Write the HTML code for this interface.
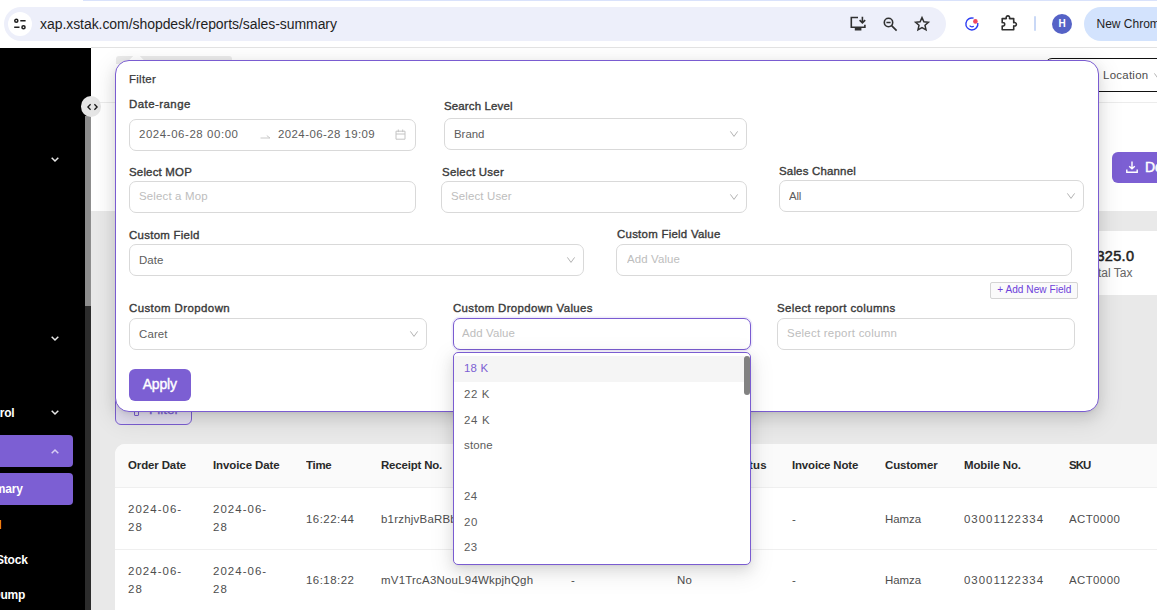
<!DOCTYPE html>
<html><head><meta charset="utf-8">
<style>
*{box-sizing:border-box;margin:0;padding:0}
html,body{width:1157px;height:610px;overflow:hidden;background:#fff;font-family:"Liberation Sans",sans-serif;}
body{position:relative}
.abs{position:absolute}
svg{position:absolute;overflow:visible}
/* browser chrome */
#chrome{left:0;top:0;width:1157px;height:48px;background:#fff}
#chromeline{left:91px;top:47px;width:1066px;height:1px;background:#e2e2e2}
#topstrip{left:83px;top:0;width:1074px;height:1px;background:#d9e2fb}
#omni{left:4px;top:7px;width:942px;height:34px;background:#edeffa;border-radius:17px}
#omni .ic{left:4px;top:5px;width:24px;height:24px;border-radius:12px;background:#fff}
#url{left:40px;top:15.5px;font-size:14px;line-height:16px;color:#1f1f1f;white-space:nowrap;letter-spacing:-.06px}
#newchrome{left:1084px;top:7px;width:90px;height:34px;border-radius:17px;background:#d3e3fd}
#newchrome span{position:absolute;left:12.5px;top:10px;font-size:12px;line-height:14px;color:#1f1f1f;white-space:nowrap}
#avatar{left:1052px;top:14px;width:20px;height:20px;border-radius:50%;background:#5562c6;color:#fff;font-size:10px;font-weight:bold;text-align:center;line-height:20px}
#divider{left:1034px;top:16px;width:2px;height:15px;background:#c9d8f6;border-radius:1px}
/* sidebar */
#side{left:0;top:48px;width:91px;height:562px;background:#000}
#strack{left:85px;top:306px;width:6px;height:304px;background:#2c2c2c}
#sthumb{left:85px;top:116px;width:6px;height:190px;background:#8d8d8d}
.sb{color:#fff;font-weight:bold;font-size:12px;line-height:14px;white-space:nowrap;letter-spacing:-.2px;text-align:right}
.pill{left:0;width:73px;height:31.5px;background:#7c5fd3;border-radius:0 4px 4px 0}
#toggle{left:81.3px;top:96.2px;width:20.2px;height:20.6px;border-radius:50%;background:#e6e6e6}
/* main */
#main{left:91px;top:48px;width:1066px;height:562px;background:#e9e9e9}
#hdr{left:91px;top:48px;width:1066px;height:163px;background:#fff}
#hline{left:91px;top:102px;width:1066px;height:1px;background:#ececec}
#greytab{left:116px;top:56px;width:116px;height:8px;background:#ebebeb;border-radius:3px 3px 0 0}
#loc{left:1045px;top:58px;width:130px;height:34px;border:1px solid #111;border-radius:7px;background:#fff}
#loc span{position:absolute;left:57px;top:9px;font-size:10.8px;line-height:14.83px;color:#4d4d4d;letter-spacing:.25px;white-space:nowrap;transform:scaleX(1.06);transform-origin:0 50%}
#dl{left:1112px;top:152px;width:60px;height:31px;background:#7c5fd3;border-radius:6px}
#dl span{position:absolute;left:33px;top:7px;color:#fff;font-size:14px;line-height:16px;-webkit-text-stroke:.45px #fff}
#stat{left:1090px;top:231px;width:80px;height:64px;background:#fff}
#stat b{position:absolute;left:6.500px;top:16.7px;font-size:14.5px;line-height:16px;color:#222;letter-spacing:.3px;font-weight:normal;-webkit-text-stroke:.5px #222}
#stat i{position:absolute;left:8px;top:35px;font-style:normal;font-size:12px;line-height:14px;color:#666}
#fbtn{left:115px;top:393px;width:77px;height:32px;border:1px solid #7c5fd3;border-radius:6px;background:#e6e2f3}
/* popover */
#pop{left:115px;top:60px;width:984px;height:352px;background:#fff;border:1px solid #7a5cd1;border-radius:14px;box-shadow:0 5px 13px rgba(0,0,0,.10),0 2px 5px -3px rgba(0,0,0,.14),0 7px 22px 6px rgba(0,0,0,.07)}
#arrow{left:131px;top:55px;width:11px;height:11px;background:#fff;transform:rotate(45deg)}
.lbl{font-size:10.8px;line-height:14.83px;color:#3a3a3a;white-space:nowrap;-webkit-text-stroke:.35px #3a3a3a;transform:scaleX(1.06);transform-origin:0 50%}
.inp{border:1px solid #d9d9d9;border-radius:7px;background:#fff;height:32px}
.inp span{position:absolute;left:9px;top:8px;font-size:10.8px;line-height:14.83px;color:#5c5c5c;white-space:nowrap;transform:scaleX(1.06);transform-origin:0 50%}
.inp span.ph{color:#bdbdbd;top:7.2px}
.inp svg.chev{right:8.4px;top:12.2px}
#apply{left:129px;top:369px;width:62px;height:32px;background:#7c5fd3;border-radius:6px;color:#fff;font-size:14px;text-align:center;line-height:30.5px;letter-spacing:-.2px;-webkit-text-stroke:.4px #fff;padding-right:.5px}
#addnew{left:990.300px;top:282.2px;width:88.2px;height:17.3px;border:1px solid #d4d4d4;background:#fafafa;border-radius:2px;font-size:10.1px;line-height:14.8px;color:#6d3fdb;text-align:center;white-space:nowrap;letter-spacing:.03px}
/* dropdown */
#dd{left:453px;top:352px;width:298px;height:213px;background:#fff;border:1px solid #7a5cd1;border-radius:5px;box-shadow:0 5px 13px rgba(0,0,0,.10),0 2px 5px -3px rgba(0,0,0,.14),0 7px 22px 6px rgba(0,0,0,.06)}
#dd .hi{left:0;top:3.300px;width:290px;height:25.5px;background:#f5f5f5}
#dd .thumb{left:290.2px;top:3.200px;width:5.5px;height:39px;background:#828282;border-radius:3px}
.opt{left:10px;font-size:10.8px;line-height:14.83px;color:#5c5c5c;white-space:nowrap;transform:scaleX(1.06);transform-origin:0 50%}
/* table */
#tbl{left:115px;top:444px;width:1050px;height:170px;background:#fff;border-radius:10px 0 0 0}
#thead{left:115px;top:444px;width:1050px;height:44px;background:#fafafa;border-radius:10px 0 0 0;border-bottom:1px solid #efefef}
#rline{left:115px;top:549px;width:1050px;height:1px;background:#efefef}
.th{font-size:10.8px;line-height:14.83px;color:#2a2a2a;white-space:nowrap;font-weight:bold;transform:scaleX(1.06);transform-origin:0 50%}
.td{font-size:10.8px;line-height:17.6px;color:#4d4d4d;white-space:nowrap;transform:scaleX(1.06);transform-origin:0 50%}
</style></head><body>
<div id="main" class="abs"></div>
<div id="hdr" class="abs"></div>
<div id="hline" class="abs"></div>
<div id="greytab" class="abs"></div>
<div id="loc" class="abs"><span>Location</span><svg width="8" height="6" style="left:108px;top:14px" viewBox="0 0 8 6" fill="none" stroke="#b3b3b3" stroke-width="1"><path d="M.4.4 4 5.4 7.600.4"/></svg></div>
<div id="dl" class="abs"><span>Do</span>
<svg width="14" height="14" style="left:13px;top:8px" viewBox="0 0 14 14" fill="none" stroke="#fff" stroke-width="1.4"><path d="M7 1.5v7M4.2 6.2 7 8.8l2.8-2.6M1.8 9.5v2.7h10.4V9.5"/></svg></div>
<div id="stat" class="abs"><b>325.0</b><i>tal Tax</i></div>
<div id="fbtn" class="abs"><span style="position:absolute;left:33px;top:7.5px;font-size:13.5px;line-height:16px;color:#7c5fd3;-webkit-text-stroke:.3px #7c5fd3">Filter</span><span style="position:absolute;left:17.5px;top:12.5px;width:5px;height:9px;border:1.300px solid #7c5fd3;border-radius:1px"></span></div>

<div id="side" class="abs"></div>
<div id="strack" class="abs"></div>
<div id="sthumb" class="abs"></div>
<div class="abs pill" style="top:435px"></div>
<div class="abs pill" style="top:473px"></div>
<div class="abs sb" style="right:1142.6px;top:406.2px">Control</div>
<div class="abs sb" style="right:1134.3px;top:482.1px">Summary</div>
<div class="abs sb" style="right:1155.7px;top:517.6px;color:#f5a623">Detail</div>
<div class="abs sb" style="right:1129.3px;top:553.1px">Stock</div>
<div class="abs sb" style="right:1131.8px;top:587.5px">Dump</div>
<svg width="8" height="5" style="left:50.5px;top:156.5px" viewBox="0 0 8 5" fill="none" stroke="#e8e8e8" stroke-width="1.5"><path d="M.7.7 4 4 7.3.7"/></svg>
<svg width="8" height="5" style="left:50.5px;top:336px" viewBox="0 0 8 5" fill="none" stroke="#e8e8e8" stroke-width="1.5"><path d="M.7.7 4 4 7.3.7"/></svg>
<svg width="8" height="5" style="left:50.5px;top:410.2px" viewBox="0 0 8 5" fill="none" stroke="#e8e8e8" stroke-width="1.5"><path d="M.7.7 4 4 7.3.7"/></svg>
<svg width="8" height="5" style="left:50.5px;top:449px" viewBox="0 0 8 5" fill="none" stroke="#d8cff3" stroke-width="1.5"><path d="M.7 4.3 4 1 7.3 4.3"/></svg>
<div id="toggle" class="abs"></div>
<svg width="11" height="6" style="left:86.7px;top:103.6px" viewBox="0 0 11 6" fill="none" stroke="#1a1a1a" stroke-width="1.300"><path d="M3.6.3.9 3l2.700 2.700M7.400.3 10.100 3 7.400 5.700"/></svg>

<div id="tbl" class="abs"></div>
<div id="thead" class="abs"></div>
<div id="rline" class="abs"></div>
<div class="abs th" style="left:128px;top:458px;letter-spacing:-0.10px">Order Date</div>
<div class="abs th" style="left:212.5px;top:458px;letter-spacing:-0.07px">Invoice Date</div>
<div class="abs th" style="left:306px;top:458px;letter-spacing:-0.26px">Time</div>
<div class="abs th" style="left:380.5px;top:458px;letter-spacing:-0.16px">Receipt No.</div>
<div class="abs th" style="left:749.3px;top:458px;letter-spacing:0.25px">tus</div>
<div class="abs th" style="left:792px;top:458px;letter-spacing:-0.15px">Invoice Note</div>
<div class="abs th" style="left:885px;top:458px;letter-spacing:-0.11px">Customer</div>
<div class="abs th" style="left:964px;top:458px;letter-spacing:-0.09px">Mobile No.</div>
<div class="abs th" style="left:1069px;top:458px;letter-spacing:-0.88px">SKU</div>

<div class="abs td" style="left:128px;top:501.42px;letter-spacing:0.99px">2024-06-<br>28</div>
<div class="abs td" style="left:212.5px;top:501.42px;letter-spacing:0.99px">2024-06-<br>28</div>
<div class="abs td" style="left:306px;top:510.5px;letter-spacing:0.46px">16:22:44</div>
<div class="abs td" style="left:380.5px;top:510.5px;letter-spacing:0.22px">b1rzhjvBaRBb</div>
<div class="abs td" style="left:792px;top:510.5px;letter-spacing:0.00px">-</div>
<div class="abs td" style="left:885px;top:510.5px;letter-spacing:-0.06px">Hamza</div>
<div class="abs td" style="left:964px;top:510.5px;letter-spacing:0.93px">03001122334</div>
<div class="abs td" style="left:1069px;top:510.5px;letter-spacing:0.38px">ACT0000</div>

<div class="abs td" style="left:128px;top:563.42px;letter-spacing:0.99px">2024-06-<br>28</div>
<div class="abs td" style="left:212.5px;top:563.42px;letter-spacing:0.99px">2024-06-<br>28</div>
<div class="abs td" style="left:306px;top:572.42px;letter-spacing:0.46px">16:18:22</div>
<div class="abs td" style="left:380.5px;top:572.42px;letter-spacing:0.22px">mV1TrcA3NouL94WkpjhQgh</div>
<div class="abs td" style="left:571px;top:572.42px;letter-spacing:0.00px">-</div>
<div class="abs td" style="left:677px;top:572.42px;letter-spacing:0.15px">No</div>
<div class="abs td" style="left:792px;top:572.42px;letter-spacing:0.00px">-</div>
<div class="abs td" style="left:885px;top:572.42px;letter-spacing:-0.06px">Hamza</div>
<div class="abs td" style="left:964px;top:572.42px;letter-spacing:0.93px">03001122334</div>
<div class="abs td" style="left:1069px;top:572.42px;letter-spacing:0.38px">ACT0000</div>

<div id="arrow" class="abs"></div>
<div id="pop" class="abs"></div>
<div class="abs" style="left:129px;top:72.4px;font-size:10.8px;line-height:14.83px;color:#3a3a3a;white-space:nowrap;-webkit-text-stroke:.25px #3a3a3a;letter-spacing:.26px;transform:scaleX(1.06);transform-origin:0 50%">Filter</div>

<div class="abs lbl" style="left:129px;top:96.5px;letter-spacing:0.43px">Date-range</div>
<div class="abs inp" style="left:129px;top:119px;width:287px">
  <span style="left:8.8px;top:7px;letter-spacing:0.54px">2024-06-28 00:00</span>
  <span style="left:148.2px;top:7px;letter-spacing:0.40px">2024-06-28 19:09</span>
  <svg width="11" height="5" style="left:129.800px;top:13.8px" viewBox="0 0 11 5" fill="none" stroke="#c9c9c9" stroke-width="1"><path d="M.5 4h9.5L6.8 1.6"/></svg>
  <svg width="11" height="11" style="left:264.800px;top:8.700px" viewBox="0 0 11 11" fill="none" stroke="#c4c4c4" stroke-width="1"><path d="M1 2.2h9v8H1zM1 5h9M3.3.5v2.6M7.7.5v2.6"/></svg>
</div>

<div class="abs lbl" style="left:444px;top:98.5px;letter-spacing:0.15px">Search Level</div>
<div class="abs inp" style="left:444px;top:118px;width:303px"><span style="left:8.8px;top:8.3px;letter-spacing:-0.03px">Brand</span>
  <svg class="chev" width="8" height="6" viewBox="0 0 8 6" fill="none" stroke="#b3b3b3" stroke-width="1"><path d="M.4.4 4 5.4 7.600.4"/></svg></div>

<div class="abs lbl" style="left:129px;top:165px;letter-spacing:0.18px">Select MOP</div>
<div class="abs inp" style="left:129px;top:181px;width:287px;height:32px"><span class="ph" style="left:8.8px;letter-spacing:0.15px">Select a Mop</span></div>

<div class="abs lbl" style="left:441.5px;top:165px;letter-spacing:0.24px">Select User</div>
<div class="abs inp" style="left:441px;top:181px;width:306px;height:32px"><span class="ph" style="left:9.3px;letter-spacing:0.14px">Select User</span>
  <svg class="chev" width="8" height="6" viewBox="0 0 8 6" fill="none" stroke="#b3b3b3" stroke-width="1"><path d="M.4.4 4 5.4 7.600.4"/></svg></div>

<div class="abs lbl" style="left:779px;top:164.3px;letter-spacing:0.18px">Sales Channel</div>
<div class="abs inp" style="left:779px;top:180px;width:305px;height:32px"><span style="left:9.4px;letter-spacing:-0.20px">All</span>
  <svg class="chev" width="8" height="6" viewBox="0 0 8 6" fill="none" stroke="#b3b3b3" stroke-width="1"><path d="M.4.4 4 5.4 7.600.4"/></svg></div>

<div class="abs lbl" style="left:129px;top:227.5px;letter-spacing:0.26px">Custom Field</div>
<div class="abs inp" style="left:129px;top:244px;width:455px;height:32px"><span style="left:8.8px;top:8.2px;letter-spacing:0.04px">Date</span>
  <svg class="chev" width="8" height="6" viewBox="0 0 8 6" fill="none" stroke="#b3b3b3" stroke-width="1"><path d="M.4.4 4 5.4 7.600.4"/></svg></div>

<div class="abs lbl" style="left:616.5px;top:227.3px;letter-spacing:0.24px">Custom Field Value</div>
<div class="abs inp" style="left:616px;top:244px;width:456px;height:32px"><span class="ph" style="left:9.6px;letter-spacing:0.11px">Add Value</span></div>

<div id="addnew" class="abs">+ Add New Field</div>

<div class="abs lbl" style="left:129px;top:301.4px;letter-spacing:0.40px">Custom Dropdown</div>
<div class="abs inp" style="left:129px;top:318px;width:298px;height:32px"><span style="left:8.8px;letter-spacing:0.12px">Caret</span>
  <svg class="chev" width="8" height="6" viewBox="0 0 8 6" fill="none" stroke="#b3b3b3" stroke-width="1"><path d="M.4.4 4 5.4 7.600.4"/></svg></div>

<div class="abs lbl" style="left:453px;top:301px;letter-spacing:0.33px">Custom Dropdown Values</div>
<div class="abs inp" style="left:453px;top:318px;width:298px;height:32px;border:1.5px solid #7a5cd1;box-shadow:0 0 0 1.5px rgba(124,95,211,.12)"><span class="ph" style="left:8.2px;top:6.7px;letter-spacing:0.11px">Add Value</span></div>

<div class="abs lbl" style="left:777px;top:301.4px;letter-spacing:0.36px">Select report columns</div>
<div class="abs inp" style="left:777px;top:318px;width:298px;height:32px"><span class="ph" style="left:8.8px;letter-spacing:0.24px">Select report column</span></div>

<div id="apply" class="abs">Apply</div>

<div id="dd" class="abs">
  <div class="abs hi"></div>
  <div class="abs thumb"></div>
  <div class="abs opt" style="top:8.4px;color:#7c5fd3;letter-spacing:0.17px">18 K</div>
  <div class="abs opt" style="top:34px;letter-spacing:0.58px">22 K</div>
  <div class="abs opt" style="top:59.5px;letter-spacing:0.64px">24 K</div>
  <div class="abs opt" style="top:85px;letter-spacing:0.16px">stone</div>
  <div class="abs opt" style="top:136.4px;letter-spacing:0.44px">24</div>
  <div class="abs opt" style="top:162px;letter-spacing:0.63px">20</div>
  <div class="abs opt" style="top:187.3px;letter-spacing:0.44px">23</div>
</div>

<div id="chrome" class="abs"></div>
<div id="chromeline" class="abs"></div>
<div id="topstrip" class="abs"></div>
<div id="omni" class="abs"><div class="abs ic"></div>
<svg width="14" height="10" style="left:9px;top:12px" viewBox="0 0 14 10" fill="none" stroke="#1f1f1f" stroke-width="1.5"><circle cx="3.300" cy="1.8" r="1.55"/><path d="M7.300 1.8h5.3M1.2 8.3h5.3"/><circle cx="10.5" cy="8.3" r="1.55"/></svg>
</div>
<div id="url" class="abs">xap.xstak.com/shopdesk/reports/sales-summary</div>
<!-- install icon -->
<svg width="17" height="15" style="left:850px;top:16px" viewBox="0 0 17 15" fill="none" stroke="#303030" stroke-width="1.6"><path d="M8 1.500H1.3v9.800h13.6V8.800"/><path d="M4.800 13.200h6.600" stroke-width="2.600"/><path d="M12.400.8v5.800M9.600 4.200l2.800 2.600 2.800-2.600"/></svg>
<!-- zoom out -->
<svg width="15" height="15" style="left:882.5px;top:17px" viewBox="0 0 15 15" fill="none" stroke="#303030" stroke-width="1.6"><circle cx="5.5" cy="5.5" r="4.2"/><path d="M8.6 8.6 13.6 13.6M3.4 5.5h4.2"/></svg>
<!-- star -->
<svg width="16" height="15" style="left:913.8px;top:16px" viewBox="0 0 16 15" fill="none" stroke="#303030" stroke-width="1.5" stroke-linejoin="miter"><path d="M8 1.6l1.9 4.2 4.5.5-3.4 3 1 4.5L8 11.5 4 13.8l1-4.5-3.4-3 4.5-.5z"/></svg>
<!-- blue circle -->
<svg width="14" height="14" style="left:965px;top:16.5px" viewBox="0 0 14 14" fill="none"><path d="M8.6 1.2A6 6 0 1 0 12.8 6" stroke="#2c3cf2" stroke-width="1.4"/><path d="M4.6 8.6c1.2 1.3 2.8 1.5 4.2.6" stroke="#2c3cf2" stroke-width="1.3"/><circle cx="10.4" cy="4.4" r="2.3" fill="#f0475e"/></svg>
<!-- puzzle -->
<svg width="17" height="16" style="left:1000.5px;top:15px" viewBox="0 0 17 16" fill="none" stroke="#303030" stroke-width="1.6" stroke-linejoin="round"><path d="M1.2 3.6h4.1c-.5-1.5.3-2.7 1.6-2.7s2.100 1.200 1.600 2.700h4.200v4.100c1.500-.5 2.700.3 2.700 1.600s-1.200 2.100-2.700 1.600v3.900H1.200v-3.800c1.600.3 2.500-.6 2.500-1.700s-.9-2-2.500-1.700z"/></svg>
<div id="divider" class="abs"></div>
<div id="avatar" class="abs">H</div>
<div id="newchrome" class="abs"><span>New Chrome</span></div>
</body></html>
